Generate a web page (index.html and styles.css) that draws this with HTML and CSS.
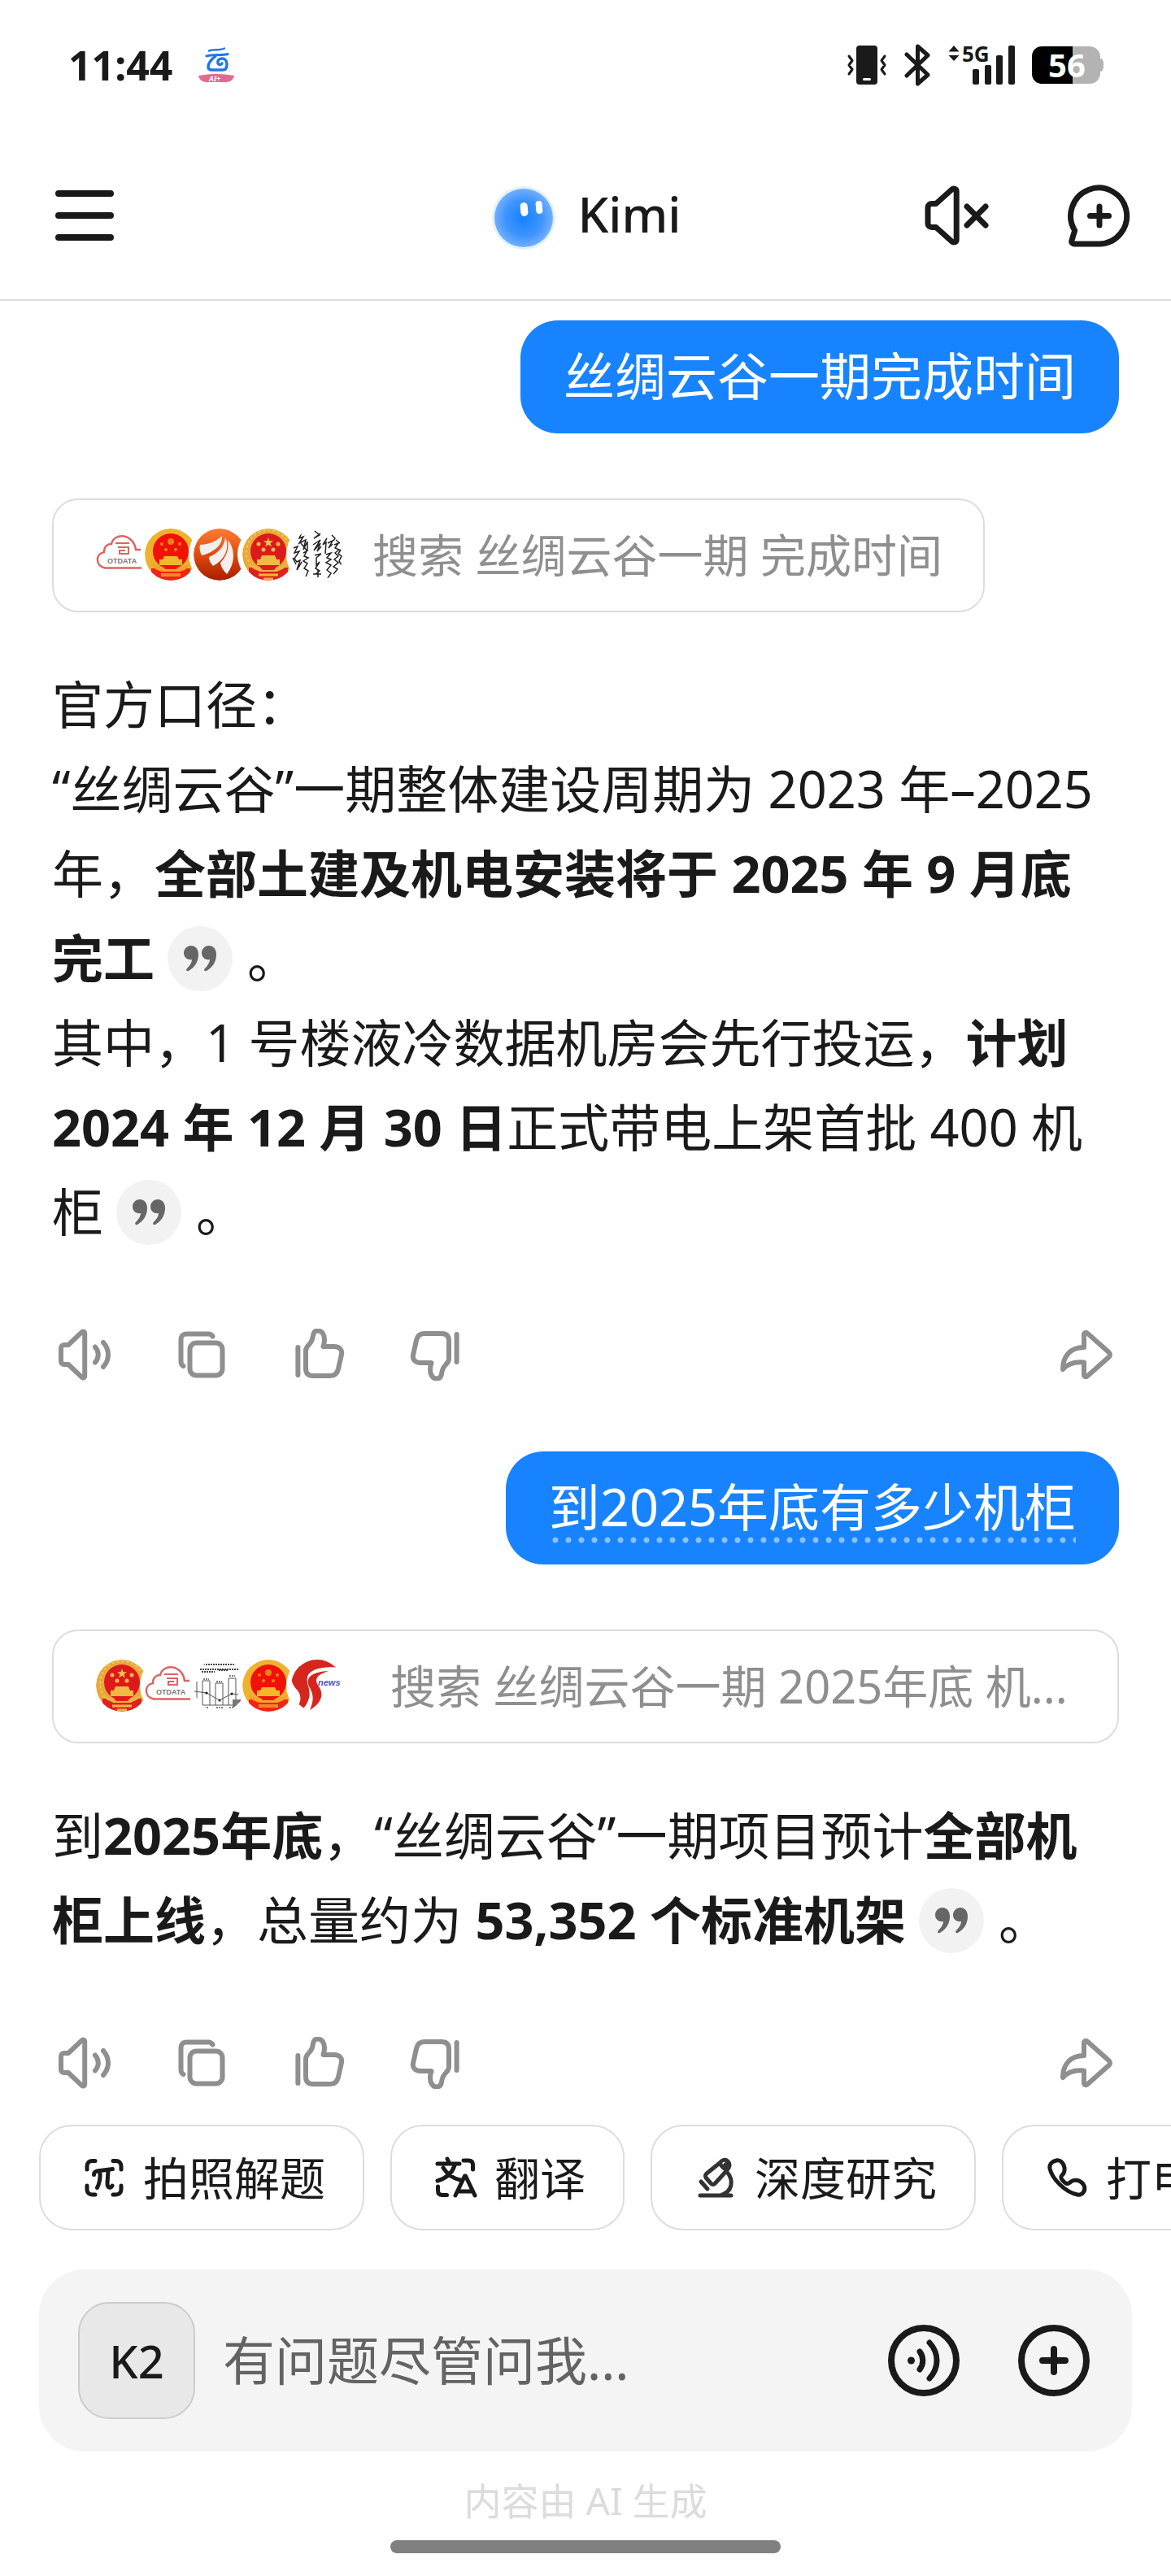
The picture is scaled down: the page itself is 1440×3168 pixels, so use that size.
FILE: index.html
```html
<!DOCTYPE html>
<html lang="zh-CN">
<head>
<meta charset="utf-8">
<meta name="viewport" content="width=device-width, initial-scale=1">
<title>Kimi</title>
<link rel="stylesheet" href="styles.css">
</head>
<body>
<svg class="sprite" aria-hidden="true">
  <defs>
    <mask id="cut"><circle cx="32" cy="32" r="32" fill="#fff"/><circle cx="92" cy="32" r="38" fill="#000"/></mask>
    <clipPath id="disc"><circle cx="32" cy="32" r="32"/></clipPath>
    <radialGradient id="ballFill" cx=".5" cy=".5" r=".52"><stop offset="0" stop-color="#1782ff"/><stop offset=".6" stop-color="#3d94ff"/><stop offset="1" stop-color="#78b2fd"/></radialGradient>
    <linearGradient id="orange" x1="0" y1="0" x2="0" y2="1"><stop offset="0" stop-color="#ff7d33"/><stop offset=".5" stop-color="#e04a10"/><stop offset="1" stop-color="#a81e00"/></linearGradient>
    <symbol id="emblem" viewBox="0 0 64 64">
      <g mask="url(#cut)">
        <circle cx="32" cy="32" r="32" fill="#e9a93a"/>
        <circle cx="32" cy="29" r="27" fill="none" stroke="#f2c75c" stroke-width="2" stroke-dasharray="3 3"/>
        <circle cx="32" cy="28" r="22" fill="#dc1a1c"/>
        <path d="M8 48h48v16H8z" fill="#e0201c"/>
        <path d="M32 11l1.500 4.300h4.500l-3.600 2.700 1.400 4.400-3.800-2.700-3.800 2.700 1.400-4.400-3.600-2.700h4.500z" fill="#f3c44d"/>
        <g fill="#f0b848"><circle cx="20" cy="19" r="2.500"/><circle cx="44" cy="19" r="2.500"/><circle cx="26" cy="26" r="2.500"/><circle cx="38" cy="26" r="2.500"/></g>
        <path d="M24 33h16l2 5h4v7H18v-7h4z" fill="#f0ba45"/>
        <path d="M9 42c7 6 13 4 16 9h14c3-5 9-3 16-9-2 9-8 8-12 11H21c-4-3-10-2-12-11z" fill="#edb243"/>
        <path d="M20 57h24M26 62h12" stroke="#efb544" stroke-width="3"/>
      </g>
    </symbol>
    <symbol id="emblem-glow" viewBox="0 0 64 64">
      <g mask="url(#cut)">
        <circle cx="32" cy="32" r="32" fill="#f0b22e"/>
        <circle cx="32" cy="28" r="22" fill="#f01208"/>
        <path d="M8 49h48v15H8z" fill="#f22414"/>
        <g fill="#f08018"><circle cx="32" cy="16" r="4"/><circle cx="21" cy="19" r="2"/><circle cx="43" cy="19" r="2"/><circle cx="26" cy="26" r="2"/><circle cx="38" cy="26" r="2"/></g>
        <path d="M24 34h16l2 4h4v7H18v-7h4z" fill="#f5b62c"/>
        <path d="M8 42c7 6 13 4 17 8h14c4-4 10-2 17-8-3 9-8 9-13 11H21c-5-2-10-2-13-11z" fill="#f2a528"/>
        <path d="M20 57h24" stroke="#f5882a" stroke-width="4"/>
      </g>
    </symbol>
    <symbol id="otdata" viewBox="0 0 64 64">
      <g fill="none" stroke="#dc6463" stroke-width="2.500">
        <path d="M56 48.500H11C-1 46-1 31 10 29c0-7 4-10 9-10C22 5 46 5 49 26h6"/>
        <path d="M24 18h17M27 23h13v8H29v-4h7" stroke-width="2"/>
      </g>
      <text x="14" y="43" class="logo-text" font-size="9" fill="#777">OTDATA</text>
    </symbol>
    <symbol id="wings" viewBox="0 0 64 64">
      <circle cx="32" cy="32" r="32" fill="url(#orange)" mask="url(#cut)"/>
      <path d="M8 20c12-1 20-4 27-11 1 11-9 20-25 24-2-4-3-8-2-13zM19 35c12-5 19-13 20-24 6 12 0 27-15 35-3-3-5-7-5-11zM33 42c8-8 11-18 9-28 9 10 10 28-1 42-4-4-7-8-8-14z" fill="#f3efee"/>
    </symbol>
    <symbol id="calligraphy" viewBox="0 0 64 64">
      <g clip-path="url(#disc)" fill="none" stroke="#222" stroke-width="1.500">
        <path d="M13 5l-3 7 5-2-5 8 8-4-3 12 5-10v12M12 18l8 10M3 24l5-2-4 8 6-2-6 9 3 4 4-2-4 12 6-10M15 30l4-2-3 6 5 2-6 4 5 3-4 6 5 3-3 7M29 3l6 5-7 4 8-6M27 20l9-6-8 13 8-9-4 10 5-6M29 33l8-2-6 5v9l4-4-5 8 5 3-5 4M27 56h10M33 50v10"/>
        <path d="M44 12l-5 8 4-3-1 14M45 18l6-3-5 9 5-5M43 32l6-2-5 6 5 2-6 4 6 3-5 6 5 4-4 6M50 8l4 4-2 3M55 14l5 4M53 20l5-2-4 6 5 2-5 4 4 4-5 4 5 4-6 5 5 3-5 6M61 26l-3 5 4 3-3 6 3 5M2 36l4 8"/>
      </g>
    </symbol>
    <symbol id="chart" viewBox="0 0 64 64">
      <g mask="url(#cut)">
        <g fill="none" stroke="#555" stroke-width="1">
          <path d="M11 56V26h9v30M27 56V29h9v27M43 56V23h9v33M4 27v22M9 56h46M1 39l15 2 16 9 15-8 8 1" />
          <path d="M12 6h42M8 12h48M10 15h16M31 13h12" stroke="#444" stroke-width="2" stroke-dasharray="2 1"/>
          <path d="M12 24h7M28 27h7M44 20h7M13 59h6M28 59h8M44 59h6" stroke-width="1.500" stroke-dasharray="2 1"/>
        </g>
        <g fill="#111"><circle cx="16" cy="41" r="1.500"/><circle cx="32" cy="50" r="1.500"/><circle cx="47" cy="42" r="1.500"/></g>
        <path d="M48 49h12v5h-6v7h-6z" fill="#777"/>
      </g>
    </symbol>
    <symbol id="snews" viewBox="0 0 64 64">
      <g clip-path="url(#disc)">
        <path d="M4 0h56v10C46 8 22 10 20 22c-2 9 6 15 1 28-2 6-6 11-12 14H3c9-9 11-18 5-26C-2 28-2 18 8 10z" fill="#d5251d"/>
        <path d="M46 14c-19 1-27 7-25 16 3 9 10 14 2 32 14-8 18-19 11-29-6-9-3-14 12-19z" fill="#d5251d"/>
      </g>
      <text x="33" y="32" class="logo-text" font-size="11" font-style="italic" fill="#4a59b5">news</text>
    </symbol>
    <symbol id="quote" viewBox="0 0 40 32">
      <path d="M9 0c6 0 9 5 9 11 0 9-5 16-12 20-2 1-4-1-2-3 4-4 6-8 6-11-6 1-10-3-10-8 0-5 4-9 9-9zM31 0c6 0 9 5 9 11 0 9-5 16-12 20-2 1-4-1-2-3 4-4 6-8 6-11-6 1-10-3-10-8 0-5 4-9 9-9z" fill="#666"/>
    </symbol>
    <symbol id="speak" viewBox="0 0 64 64"><path d="M7 20h5L28.500 4.300c1.500-1.500 3.700-.5 3.700 1.700v52c0 2.200-2.200 3.200-3.700 1.700L12 44H7c-2.500 0-4-1.500-4-4V24c0-2.500 1.500-4 4-4zM45 22.500c5 5.500 5 13.500 0 19M55 17c8 9 8 21 0 30"/></symbol>
    <symbol id="copy" viewBox="0 0 64 64"><rect x="17.500" y="17.500" width="40" height="40" rx="8"/><path d="M45.500 9.500C44.500 7.600 42.500 6.500 40 6.500H13c-4 0-6.500 2.500-6.500 6.500v27.500c0 2.500 1 4.500 3 5.500"/></symbol>
    <symbol id="like" viewBox="0 0 64 64"><path d="M6.400 23v34M16 27c0-3.500 1.500-5 4-7.500 3-3 4.500-7 5-11 .6-4 3-6 6-6 5 0 8 5 8 11 0 3-.5 5.500-1.500 8.500H51c6.500 0 10 4 9 9.500l-4 18c-1.300 5.500-4.500 8.500-9.500 8.500H25c-6 0-9-3-9-9z"/></symbol>
    <symbol id="dislike" viewBox="0 0 64 64"><g transform="rotate(180 32 32)"><path d="M6.400 23v34M16 27c0-3.500 1.500-5 4-7.500 3-3 4.500-7 5-11 .6-4 3-6 6-6 5 0 8 5 8 11 0 3-.5 5.500-1.500 8.500H51c6.500 0 10 4 9 9.500l-4 18c-1.300 5.500-4.500 8.500-9.500 8.500H25c-6 0-9-3-9-9z"/></g></symbol>
    <symbol id="share" viewBox="0 0 64 64"><path d="M29 23V7.500c0-2.500 2.500-3.500 4.300-1.700L59.500 29c2 1.800 2 4.200 0 6L33.300 58.200C31.500 60 29 59 29 56.500v-15C19 40.500 9 43 3 50 3 33 13 23 29 23z"/></symbol>
  </defs>
</svg>

<div class="page">
  <header class="top">
    <div class="status">
      <span class="time">11:44</span>
      <svg class="app-logo" width="44" height="44" viewBox="0 0 44 44" aria-hidden="true">
        <g fill="none" stroke="#1f78e0" stroke-linecap="round">
          <path d="M13 4.500c6-2.500 13 0 19-3" stroke-width="2.500"/>
          <path d="M10 11c8-2.500 18-.5 26-2.500" stroke-width="3"/>
          <path d="M21 11c-5 4-9 9-9 13 0 3 2 4 5 4h13c4 0 5-4 5-7 0-5-3-7-6-7-4 0-6 3-5 6 1 2 4 2 5 0" stroke-width="3.500"/>
        </g>
        <path d="M0 35q22-4 44 0c-1 5-5 8-10 8H10C5 43 1 40 0 35z" fill="#e4688f"/>
        <text x="13" y="42" font-size="9" font-weight="700" font-style="italic" fill="#fff">AI+</text>
      </svg>
      <div class="status-icons">
        <svg width="50" height="50" viewBox="0 0 50 50" aria-label="振动">
          <rect x="12" y="1" width="26" height="48" rx="4" fill="#1a1a1a"/><rect x="20" y="41" width="10" height="3" rx="1.500" fill="#fff"/>
          <path d="M3 14l4 5.500L3 25l4 5.500L3 36M47 14l-4 5.500 4 5.500-4 5.500 4 5.500" fill="none" stroke="#1a1a1a" stroke-width="3" stroke-linecap="round" stroke-linejoin="round"/>
        </svg>
        <svg width="34" height="52" viewBox="0 0 34 52" aria-label="蓝牙"><path d="M4 13l26 25-12.500 11V3L30 14 4 39" fill="none" stroke="#1a1a1a" stroke-width="5" stroke-linecap="round" stroke-linejoin="round"/></svg>
        <svg class="signal" width="84" height="50" viewBox="0 0 84 50" aria-label="5G 信号" fill="#1a1a1a">
          <path d="M8 1l6.500 7.500h-13zM8 20l6.500-7h-13z"/>
          <text x="18" y="21" font-size="26" font-weight="700">5G</text>
          <rect x="31" y="30" width="8" height="19" rx="2"/><rect x="46" y="25" width="8" height="24" rx="2"/><rect x="60" y="13" width="8" height="36" rx="2"/><rect x="75" y="1" width="8" height="48" rx="2"/>
        </svg>
        <svg class="signal" width="88" height="46" viewBox="0 0 88 46" aria-label="电量 56%">
          <rect width="84" height="46" rx="13" fill="#b3b3b3"/><path d="M84 15c3 0 4 3 4 8s-1 8-4 8z" fill="#b3b3b3"/>
          <path d="M13 0h37v46H13C5 46 0 41 0 33V13C0 5 5 0 13 0z" fill="#000"/>
          <text x="43" y="38" font-size="40" font-weight="700" fill="#fff" text-anchor="middle">56</text>
        </svg>
      </div>
    </div>
    <nav class="nav">
      <button class="icon-btn menu" aria-label="菜单">
        <svg width="72" height="64" viewBox="0 0 72 64"><path d="M4 5h64M4 32h64M4 59h64" stroke="#1a1a1a" stroke-width="8" stroke-linecap="round"/></svg>
      </button>
      <h1 class="title">
        <svg width="84" height="84" viewBox="0 0 84 84" aria-hidden="true">
          <circle cx="42" cy="45" r="39" fill="#dff3ff"/><circle cx="42" cy="45" r="36" fill="url(#ballFill)"/>
          <rect x="38" y="26" width="9" height="17" rx="4.500" fill="#fff" transform="rotate(-5 42 34)"/><rect x="57" y="24" width="8" height="16" rx="4" fill="#fff" transform="rotate(-5 61 32)"/>
        </svg>
        <span>Kimi</span>
      </h1>
      <div class="nav-actions">
        <button class="icon-btn" aria-label="静音">
          <svg width="80" height="80" viewBox="0 -2 80 80" fill="none" stroke="#1a1a1a" stroke-width="7" stroke-linecap="round" stroke-linejoin="round"><path d="M10 23.500h5L34.500 6c2-1.800 5.700-.8 5.700 2v60c0 2.800-3.700 3.800-5.700 2L15 52.500h-5c-3 0-5-1.700-5-4.700V28.200c0-3 2-4.700 5-4.700zM53 27l23 23M76 27L53 50"/></svg>
        </button>
        <button class="icon-btn" aria-label="新对话">
          <svg width="80" height="80" viewBox="0 0 80 80" fill="none" stroke="#1a1a1a" stroke-width="7" stroke-linecap="round" stroke-linejoin="round"><path d="M40 75H9.500c-3 0-4.500-2-3.500-4.500l3.700-12A34.500 34.500 0 1 1 40 75zM40 29v23M28.500 40.500h23"/></svg>
        </button>
      </div>
    </nav>
  </header>

  <main class="chat">
    <div class="bubble">丝绸云谷一期完成时间</div>
    <button class="search">
      <span class="sources">
        <svg><use href="#otdata"/></svg><svg><use href="#emblem-glow"/></svg><svg><use href="#wings"/></svg><svg><use href="#emblem"/></svg><svg><use href="#calligraphy"/></svg>
      </span>
      <span class="query">搜索 丝绸云谷一期 完成时间</span>
    </button>
    <div class="answer">
      <p>官方口径：</p>
      <p>“丝绸云谷”一期整体建设周期为 2023 年–2025 年，<strong>全部土建及机电安装将于 2025 年 9 月底完工</strong><button class="cite" aria-label="引用"><svg width="40" height="32"><use href="#quote"/></svg></button>。</p>
      <p>其中，1 号楼液冷数据机房会先行投运，<strong>计划 2024 年 12 月 30 日</strong>正式带电上架首批 400 机柜<button class="cite" aria-label="引用"><svg width="40" height="32"><use href="#quote"/></svg></button>。</p>
    </div>
    <div class="actions">
      <button class="icon-btn" aria-label="朗读"><svg><use href="#speak"/></svg></button>
      <button class="icon-btn" aria-label="复制"><svg><use href="#copy"/></svg></button>
      <button class="icon-btn" aria-label="赞"><svg><use href="#like"/></svg></button>
      <button class="icon-btn" aria-label="踩"><svg><use href="#dislike"/></svg></button>
      <button class="icon-btn share" aria-label="分享"><svg><use href="#share"/></svg></button>
    </div>

    <div class="bubble second"><span class="dotted">到2025年底有多少机柜</span></div>
    <button class="search wide">
      <span class="sources">
        <svg><use href="#emblem"/></svg><svg><use href="#otdata"/></svg><svg><use href="#chart"/></svg><svg><use href="#emblem-glow"/></svg><svg><use href="#snews"/></svg>
      </span>
      <span class="query">搜索 丝绸云谷一期 2025年底 机...</span>
    </button>
    <div class="answer">
      <p>到<strong>2025年底</strong>，“丝绸云谷”一期项目预计<strong>全部机柜上线</strong>，总量约为 <strong>53,352 个标准机架</strong><button class="cite" aria-label="引用"><svg width="40" height="32"><use href="#quote"/></svg></button>。</p>
    </div>
    <div class="actions">
      <button class="icon-btn" aria-label="朗读"><svg><use href="#speak"/></svg></button>
      <button class="icon-btn" aria-label="复制"><svg><use href="#copy"/></svg></button>
      <button class="icon-btn" aria-label="赞"><svg><use href="#like"/></svg></button>
      <button class="icon-btn" aria-label="踩"><svg><use href="#dislike"/></svg></button>
      <button class="icon-btn share" aria-label="分享"><svg><use href="#share"/></svg></button>
    </div>
  </main>

  <footer class="bottom">
    <div class="chips">
      <button class="chip">
        <svg viewBox="0 0 48 48"><path d="M3 14v-4c0-4 2.500-6.500 6.500-6.500H13M35 3.500h3.500c4 0 6.500 2.500 6.500 6.500v4M45 34v4.500c0 4-2.500 6.500-6.500 6.500H35M13 45H9.500C5.500 45 3 42.500 3 38.500V34M11.500 20.500c0-4 3-4.500 7.500-5l15.500-2M19 17c.5 8-.5 14-3.500 19.500M29 16l-1 15c0 6 4 6.500 6 3"/></svg>拍照解题
      </button>
      <button class="chip">
        <svg viewBox="0 0 48 48"><path d="M14 1l2 4M2 7h27M23 9c-3 10-11 16-21 19M9 12c5 8 12 13 21 15M34 3h6c3.500 0 5.500 2 5.500 5.500V14M2.500 35v5c0 3.500 2 5.500 5.500 5.500h5.500M24 46l11.500-24h1L48 46M28 41h16"/></svg>翻译
      </button>
      <button class="chip">
        <svg class="soft" viewBox="0 0 48 48"><path d="M5 46h38M38 17c9 11 6 24-6 28M29 6L13 19c-2 2-2 3-1 5l6 7c2 2 3.500 2 5.500 0L38 15M29 6c3-4 7-5 10-2s3 6-1 11c-4-2-7-5-9-9zM36 8l1 1M6 29l8 9"/></svg>深度研究
      </button>
      <button class="chip">
        <svg viewBox="0 0 48 48"><path d="M11 3c5-1 9 3 10 9 .5 4-.5 7-3 9-2 2-1.500 3.500 0 5.500s4 4.500 6 5c2 .5 3-1 5-2.500 6-4 14-1 16.500 6 1.500 6-3 11-8.500 10C22 42 6 26 3 13 2 8 5.500 4 11 3z"/></svg>打电话
      </button>
    </div>
    <form class="composer">
      <button type="button" class="model">K2</button>
      <input class="prompt" type="text" aria-label="输入问题" placeholder="有问题尽管问我...">
      <button type="button" class="icon-btn" aria-label="语音">
        <svg width="88" height="88" viewBox="0 0 88 88" fill="none" stroke="#1a1a1a" stroke-width="8" stroke-linecap="round"><circle cx="44" cy="44" r="40"/><circle cx="28.500" cy="44" r="4.500" fill="#1a1a1a" stroke="none"/><path d="M39 33c5 6.500 5 15.500 0 22M51 22c12 13 12 31 0 44" stroke-width="7"/></svg>
      </button>
      <button type="button" class="icon-btn" aria-label="添加">
        <svg width="88" height="88" viewBox="0 0 88 88" fill="none" stroke="#1a1a1a" stroke-width="8" stroke-linecap="round"><circle cx="44" cy="44" r="40"/><path d="M44 30v28M30 44h28"/></svg>
      </button>
    </form>
    <p class="note">内容由 AI 生成</p>
    <div class="home-bar"></div>
  </footer>
</div>
</body>
</html>
```
FILE: styles.css
```css
* { box-sizing: border-box; }

body {
  margin: 0;
  background: #fff;
  color: #1a1a1a;
  font-family: "Noto Sans", "Noto Sans CJK SC", sans-serif;
  overflow-x: hidden;
}

h1, p { margin: 0; }
svg { display: block; flex: none; }
button { font: inherit; color: inherit; margin: 0; cursor: pointer; }

.sprite { position: absolute; width: 0; height: 0; }
.logo-text { font-family: "Liberation Sans", sans-serif; font-weight: 700; }

.page { display: flex; flex-direction: column; min-height: 100vh; }

.icon-btn { padding: 0; border: 0; background: none; }

/* Status bar and navigation */
.top { border-bottom: 2px solid #ddd; }
.status { display: flex; align-items: center; padding: 52px 83px 0 84px; }
.time { font-size: 50px; line-height: 56px; font-weight: 700; }
.app-logo { margin-left: 32px; }
.signal { overflow: visible; }
.status-icons { display: flex; align-items: center; gap: 20px; margin-left: auto; }
.nav {
  display: grid;
  grid-template-columns: 1fr auto 1fr;
  align-items: center;
  padding: 115px 48px 61px;
}
.menu { justify-self: start; margin-left: 20px; }
.title { display: flex; align-items: center; gap: 24px; font-size: 60px; line-height: 80px; font-weight: 500; }
.title span { padding-bottom: 4px; }
.nav-actions { display: flex; gap: 96px; justify-self: end; }

/* Conversation */
.chat { display: flex; flex-direction: column; align-items: flex-start; padding: 24px 64px 0; }
.bubble {
  align-self: flex-end;
  margin-bottom: 80px;
  padding: 34px 53px 38px;
  border-radius: 46px;
  background: #1783ff;
  color: #fff;
  font-size: 63px;
  line-height: 67px;
}
.bubble.second { margin-top: 87px; }
.dotted {
  padding-bottom: 3px;
  background: radial-gradient(circle, rgba(255, 255, 255, .5) 0 3px, transparent 4px) left bottom / 16px 8px repeat-x;
}

.search {
  display: flex;
  align-items: center;
  gap: 36px;
  max-width: 100%;
  padding: 35px 50px 37px 52px;
  border: 2px solid #ddd;
  border-radius: 32px;
  background: #fff;
  color: #8f8f8f;
  font-size: 56px;
  line-height: 64px;
}
.search.wide { width: 100%; gap: 58px; }
.sources { display: flex; }
.sources svg { width: 64px; height: 64px; }
.sources svg + svg { margin-left: -4px; }
.query { overflow: hidden; white-space: nowrap; text-overflow: ellipsis; }

.answer { margin: 61px 0 92px; font-size: 63px; line-height: 104px; }
.cite {
  display: inline-flex;
  align-items: center;
  justify-content: center;
  width: 80px;
  height: 80px;
  margin: 0 18px 0 16px;
  padding: 0;
  border: 0;
  border-radius: 50%;
  background: #f2f2f2;
  vertical-align: 7px;
}

.actions { display: flex; gap: 80px; align-self: stretch; padding: 0 8px; }
.actions svg {
  width: 64px;
  height: 64px;
  fill: none;
  stroke: #8f8f8f;
  stroke-width: 6;
  stroke-linecap: round;
  stroke-linejoin: round;
}
.share { margin-left: auto; }

/* Shortcuts and composer */
.bottom { margin-top: auto; padding-bottom: 28px; }
.chips { display: flex; gap: 32px; padding: 44px 0 48px 48px; overflow: hidden; }
.chip {
  display: flex;
  flex: none;
  align-items: center;
  gap: 24px;
  padding: 31px 46px 31px 54px;
  border: 2px solid #ddd;
  border-radius: 40px;
  background: #fff;
  font-size: 56px;
  line-height: 64px;
}
.chip svg {
  width: 48px;
  height: 48px;
  overflow: visible;
  fill: none;
  stroke: #1a1a1a;
  stroke-width: 5;
  stroke-linecap: round;
  stroke-linejoin: round;
}
.chip .soft { stroke: #333; }

.composer {
  display: flex;
  align-items: center;
  gap: 72px;
  margin: 0 48px;
  padding: 40px 52px 40px 48px;
  border-radius: 56px;
  background: #f4f4f4;
}
.model {
  flex: none;
  width: 144px;
  height: 144px;
  margin-right: -38px;
  padding: 0;
  border: 2px solid #ccc;
  border-radius: 38px;
  background: #e8e8e8;
  font-size: 56px;
  font-weight: 500;
}
.prompt {
  flex: 1;
  min-width: 0;
  padding: 0;
  border: 0;
  outline: 0;
  background: none;
  color: #1a1a1a;
  font: inherit;
  font-size: 64px;
  line-height: 88px;
}
.prompt::placeholder { color: #636363; opacity: 1; }

.note { margin: 32px 0 21px; color: #dcdcdc; font-size: 46px; line-height: 56px; text-align: center; }
.home-bar { width: 33.333%; height: 16px; margin: 0 auto; border-radius: 8px; background: #808080; }
```
